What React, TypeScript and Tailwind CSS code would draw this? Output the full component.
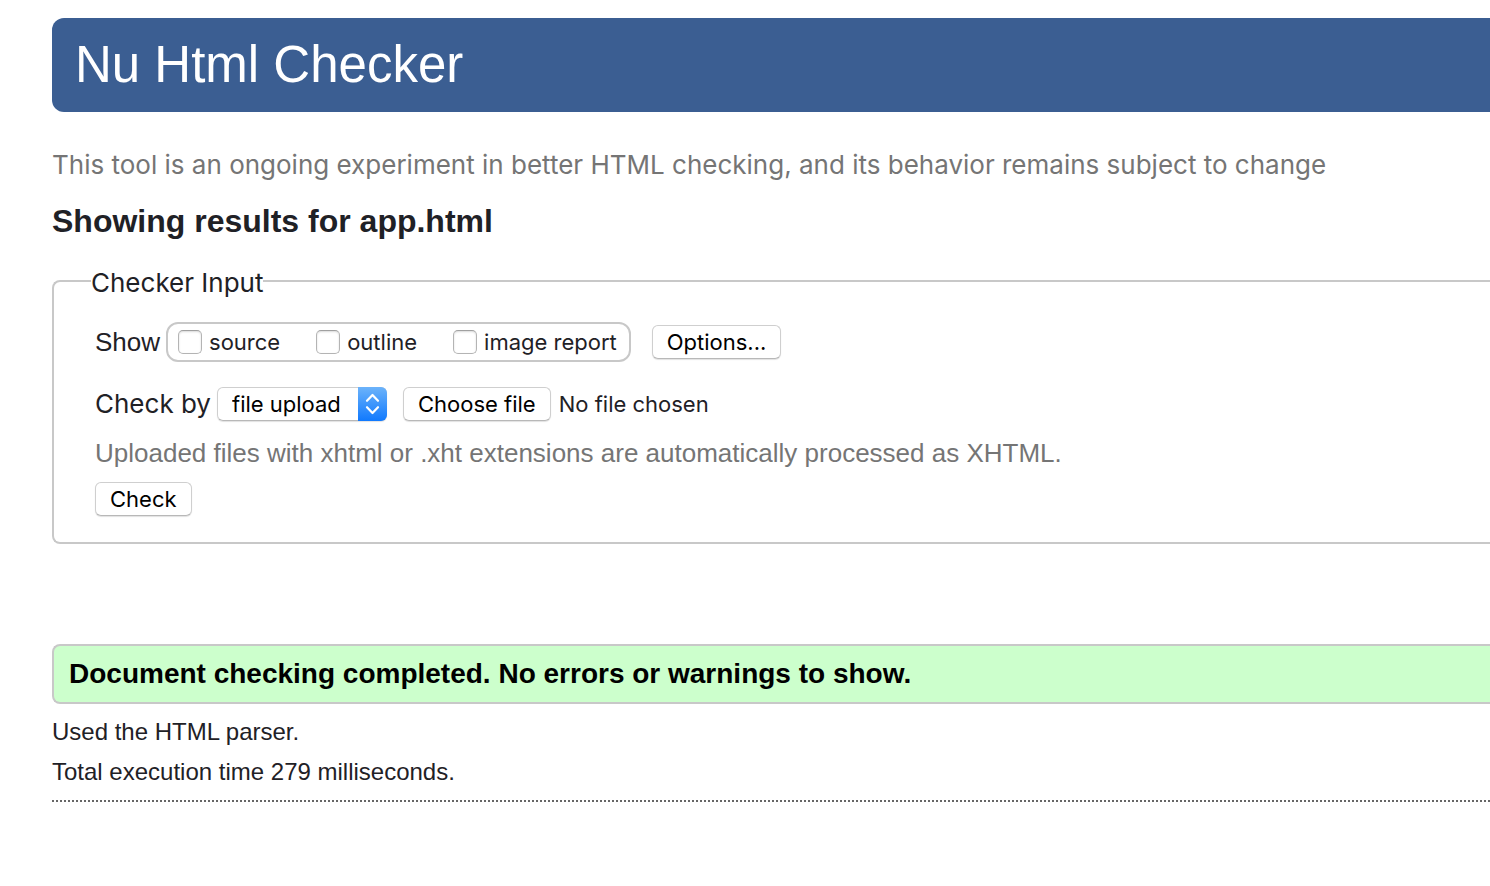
import { useState } from "react";

const buttonClass =
  "flex h-[34px] items-center justify-center rounded-md border border-[#cfcfcf] border-b-[#b8b8b8] bg-white px-3.5 font-[Inter,sans-serif] text-[22px] leading-7 text-black shadow-[0_1px_1px_rgba(0,0,0,0.12)]";

const reports = [
  { id: "source", label: "source" },
  { id: "outline", label: "outline" },
  { id: "image-report", label: "image report" },
];

function ShowOptions() {
  return (
    <div className="flex items-center">
      <span className="mr-1.5 text-[26px] leading-8">Show</span>
      <div
        role="group"
        aria-label="Show"
        className="flex h-10 items-center gap-9 rounded-xl border-2 border-[#c8c8c8] pr-3 pl-[10px]"
      >
        {reports.map((report) => (
          <div key={report.id} className="flex items-center gap-[7px]">
            <input
              id={report.id}
              type="checkbox"
              className="size-6 appearance-none rounded-[5px] border border-[#b4b4b4] border-t-[#a0a0a0] bg-white shadow-[inset_0_1px_2px_rgba(0,0,0,0.15)] checked:bg-[#1a82fb]"
            />
            <label htmlFor={report.id} className="font-[Inter,sans-serif] text-[22px] leading-7">
              {report.label}
            </label>
          </div>
        ))}
      </div>
      <button type="button" className={`${buttonClass} ml-[21px]`}>
        Options...
      </button>
    </div>
  );
}

function CheckBy() {
  const [fileName, setFileName] = useState("No file chosen");
  return (
    <div className="mt-[25px] flex items-center">
      <label htmlFor="check-by" className="mr-1.5 font-[Inter,sans-serif] text-[26px] leading-8">
        Check by
      </label>
      <div className="grid rounded-md shadow-[0_1px_1px_rgba(0,0,0,0.12)]">
        <select
          id="check-by"
          className="col-start-1 row-start-1 h-[34px] w-[170px] appearance-none rounded-md border border-[#cfcfcf] border-b-[#b8b8b8] bg-white pl-3.5 font-[Inter,sans-serif] text-[22px] leading-7 text-black"
        >
          <option>file upload</option>
          <option>address</option>
          <option>text input</option>
        </select>
        <svg
          viewBox="0 0 29 34"
          className="pointer-events-none col-start-1 row-start-1 h-[34px] w-[29px] justify-self-end"
          aria-hidden="true"
        >
          <defs>
            <linearGradient id="stepper" x1="0" y1="0" x2="0" y2="1">
              <stop offset="0" stopColor="#6cb3fa" />
              <stop offset="1" stopColor="#1079fe" />
            </linearGradient>
          </defs>
          <path d="M0 0H23a6 6 0 0 1 6 6V28a6 6 0 0 1-6 6H0Z" fill="url(#stepper)" />
          <path
            d="M9 13.8 14.5 8 20 13.8M9 20.2 14.5 26 20 20.2"
            fill="none"
            stroke="#fff"
            strokeWidth="2.2"
            strokeLinecap="round"
            strokeLinejoin="round"
          />
        </svg>
      </div>
      <label className={`${buttonClass} relative ml-4`}>
        Choose file
        <input
          type="file"
          className="sr-only"
          onChange={(event) => setFileName(event.target.files?.[0]?.name ?? "No file chosen")}
        />
      </label>
      <span className="ml-2 font-[Inter,sans-serif] text-[22px] leading-7">{fileName}</span>
    </div>
  );
}

export default function App() {
  return (
    <div className="min-h-screen overflow-x-hidden bg-white pt-[18px] pl-[52px] font-['Liberation_Sans',Arial,sans-serif] text-[#1f2126]">
      <header className="rounded-l-xl bg-[#3b5e92] px-[23px] py-[17px] text-white">
        <h1 className="text-[51px] leading-[60px]">Nu Html Checker</h1>
      </header>
      <main>
        <p className="mt-[35px] font-[Inter,sans-serif] text-[26px] leading-9 text-[#757575]">
          This tool is an ongoing experiment in better HTML checking, and its behavior remains subject to change
        </p>
        <h2 className="mt-[18px] text-[32px] leading-10 font-bold">Showing results for app.html</h2>
        <form onSubmit={(event) => event.preventDefault()}>
          <fieldset className="mt-6 rounded-l-lg border-2 border-r-0 border-[#c8c8c8] pr-10 pb-[26px] pl-[41px]">
            <legend className="-ml-1 pt-1 font-[Inter,sans-serif] text-[26px] leading-7">Checker Input</legend>
            <div className="pt-[25px]">
              <ShowOptions />
              <CheckBy />
              <p className="mt-4 text-[26px] leading-8 text-[#757575]">
                Uploaded files with xhtml or .xht extensions are automatically processed as XHTML.
              </p>
              <button type="submit" className={`${buttonClass} mt-[13px]`}>
                Check
              </button>
            </div>
          </fieldset>
        </form>
        <section className="mt-[100px]">
          <p className="rounded-l-lg border-2 border-r-0 border-[#c8c8c8] bg-[#ccffcc] px-[15px] py-3 text-[28px] leading-8 font-bold text-black">
            Document checking completed. No errors or warnings to show.
          </p>
          <p className="mt-3 text-2xl leading-8">Used the HTML parser.</p>
          <p className="mt-2 text-2xl leading-8">Total execution time 279 milliseconds.</p>
          <hr className="mt-3 border-t-2 border-dotted border-[#666666]" />
        </section>
      </main>
    </div>
  );
}
